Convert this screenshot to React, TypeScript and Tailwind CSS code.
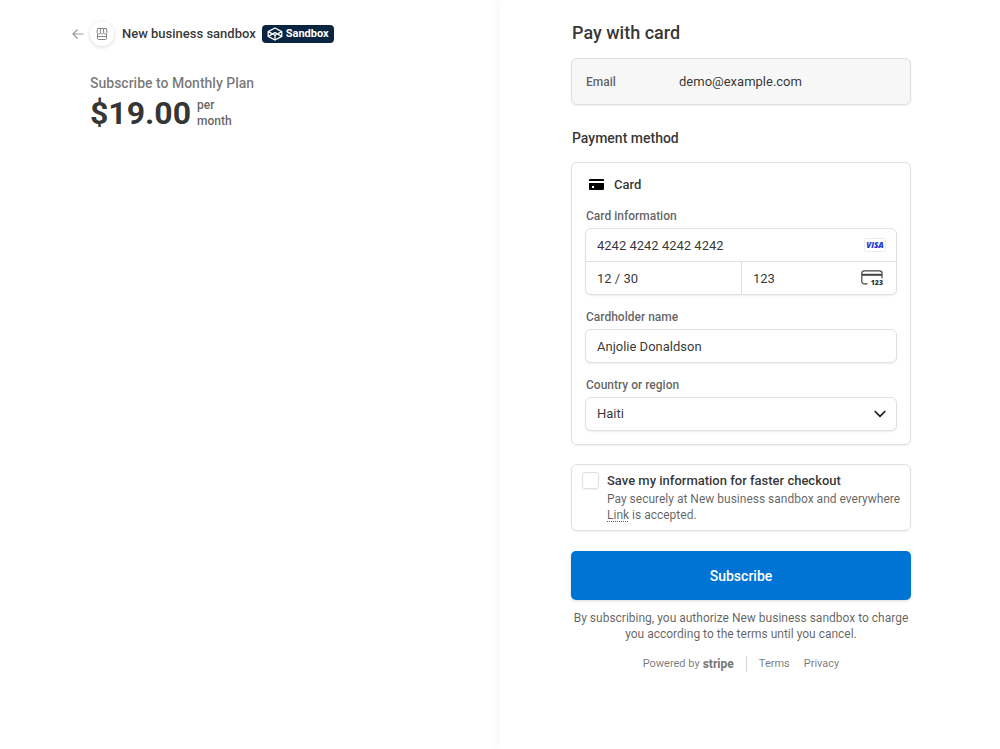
import { useState } from 'react';

const labelClass = 'block pl-px text-xs leading-4 font-medium text-[#1a1a1a]/70';
const fieldClass =
  'w-full rounded-md border border-[#e0e0e0] bg-white px-[11px] text-[13px] text-[#1a1a1a]/90 shadow-[0_1px_2px_rgba(0,0,0,0.07)] outline-none focus:border-[#0074d4]';
const bareFieldClass = 'h-8 w-full min-w-0 bg-transparent px-[11px] text-[13px] text-[#1a1a1a]/90 outline-none';

function BackArrow() {
  return (
    <svg width="12" height="12" viewBox="0 0 12 12" fill="none" stroke="#999" strokeWidth="1.2" aria-hidden="true">
      <path d="M11.5 6H1M5.5 1.5 1 6l4.5 4.5" />
    </svg>
  );
}

function StoreIcon() {
  return (
    <svg width="12" height="12" viewBox="0 0 12 12" fill="none" stroke="#858585" strokeWidth="1" aria-hidden="true">
      <path d="M1.500 .5h9l.5 4c0 .9-.7 1.500-1.600 1.500S7.600 5.400 7.600 4.700C7.600 5.400 6.800 6 6 6s-1.600-.5-1.600-1.300C4.400 5.400 3.500 6 2.600 6S1 5.400 1 4.500l.5-4Z" />
      <path d="M4.400 .8v3.900M7.600 .8v3.900M1.500 6v4.500c0 .6.300 1 1 1h7c.7 0 1-.4 1-1V6M1.500 8.500h9" />
    </svg>
  );
}

function SandboxIcon() {
  return (
    <svg width="16" height="14" viewBox="0 0 16 14" fill="none" stroke="#fff" strokeWidth="1.300" strokeLinejoin="round" aria-hidden="true">
      <path d="M8 1 14.800 4.600v4.800L8 13 1.200 9.400V4.600L8 1Z" />
      <path d="M1.200 4.600 8 8.200l6.800-3.600M1.200 9.400 8 5.600l6.800 3.800" />
      <path d="M8 8.200V13" />
    </svg>
  );
}

function CardIcon() {
  return (
    <svg width="15" height="12" viewBox="0 0 15 12" aria-hidden="true">
      <path d="M1 0h13a1 1 0 0 1 1 1v1H0V1a1 1 0 0 1 1-1Z" />
      <path fillRule="evenodd" d="M0 4h15v6a1 1 0 0 1-1 1H1a1 1 0 0 1-1-1V4Zm3 3v2h2V7H3Z" />
    </svg>
  );
}

function VisaIcon() {
  return (
    <svg width="22" height="14" viewBox="0 0 22 14" role="img" aria-label="Visa" className="shrink-0">
      <rect x=".5" y=".5" width="21" height="13" rx="1" fill="#fff" stroke="#ebebeb" />
      <text x="11" y="10" textAnchor="middle" fill="#1a34dc" className="font-['Open_Sans',sans-serif] text-[8px] font-extrabold italic">
        VISA
      </text>
    </svg>
  );
}

function CvcIcon() {
  return (
    <svg width="22" height="16" viewBox="0 0 22 16" fill="none" aria-hidden="true" className="shrink-0">
      <path d="M6.500 13.800H3.200A2.400 2.400 0 0 1 .8 11.400V3.200A2.400 2.400 0 0 1 3.200.8h15.400A2.400 2.400 0 0 1 21 3.200v5" stroke="#444" strokeWidth="1.200" />
      <path d="M1 4.800h20" stroke="#444" strokeWidth="2" />
      <text x="22" y="15" textAnchor="end" fill="#333" className="font-['Open_Sans',sans-serif] text-[7px] font-extrabold">
        123
      </text>
    </svg>
  );
}

export default function App() {
  const [number, setNumber] = useState('4242 4242 4242 4242');
  const [expiry, setExpiry] = useState('12 / 30');
  const [cvc, setCvc] = useState('123');
  const [name, setName] = useState('Anjolie Donaldson');
  const [save, setSave] = useState(false);

  return (
    <div className="grid min-h-screen grid-cols-2 bg-white font-['Roboto',sans-serif] text-[#1a1a1a]/90">
      <section className="pt-5 pr-8 pl-[72px]">
        <header className="flex h-7 items-center">
          <a href="#back" aria-label="Back" className="mr-1.5">
            <BackArrow />
          </a>
          <span className="mr-2 flex size-6 items-center justify-center rounded-full bg-white shadow-[0_1px_4px_rgba(0,0,0,0.15)]">
            <StoreIcon />
          </span>
          <span className="text-[13px] font-medium">New business sandbox</span>
          <span className="ml-1.5 flex h-[18px] items-center gap-[3px] rounded bg-[#0a2540] px-[5px] text-[11px] font-bold text-white">
            <SandboxIcon />
            Sandbox
          </span>
        </header>
        <div className="mt-[25px] pl-[18px]">
          <h1 className="text-sm leading-5 font-medium text-[#1a1a1a]/60">Subscribe to Monthly Plan</h1>
          <div className="flex items-center gap-1.5">
            <span className="text-[32px] leading-10 font-bold">$19.00</span>
            <span className="text-xs leading-4 font-medium text-[#1a1a1a]/70">
              per
              <br />
              month
            </span>
          </div>
        </div>
      </section>

      <main className="pt-[21px] pr-[89px] pb-8 pl-[71px] shadow-[-4px_0_10px_rgba(0,0,0,0.03)]">
        <form onSubmit={(event) => event.preventDefault()}>
          <h2 className="pl-px text-lg leading-6 font-medium">Pay with card</h2>
          <div className="mt-[13px] flex h-[47px] items-center rounded-md border border-[#e0e0e0] bg-[#f7f7f7] px-3.5 shadow-[0_1px_2px_rgba(0,0,0,0.07)]">
            <span className="w-[93px] text-xs font-medium text-[#1a1a1a]/70">Email</span>
            <span className="text-[13px]">demo@example.com</span>
          </div>

          <h3 className="mt-[23px] pl-px text-sm leading-5 font-medium">Payment method</h3>
          <div className="mt-3.5 rounded-md border border-[#e0e0e0] px-[13px] pt-3 pb-[13px] shadow-[0_1px_2px_rgba(0,0,0,0.07)]">
            <div className="flex h-5 items-center gap-2.5 pl-1 text-[13px] font-medium">
              <CardIcon />
              Card
            </div>

            <fieldset className="mt-[13px]">
              <legend className={labelClass}>Card information</legend>
              <div className="mt-1 rounded-md border border-[#e0e0e0] shadow-[0_1px_2px_rgba(0,0,0,0.07)]">
                <div className="flex items-center border-b border-[#e0e0e0] pr-2.5">
                  <input aria-label="Card number" className={bareFieldClass} value={number} onChange={(e) => setNumber(e.target.value)} />
                  <VisaIcon />
                </div>
                <div className="grid grid-cols-2">
                  <input aria-label="Expiration date" className={bareFieldClass} value={expiry} onChange={(e) => setExpiry(e.target.value)} />
                  <div className="flex items-center border-l border-[#e0e0e0] pr-[13px]">
                    <input aria-label="Security code" className={bareFieldClass} value={cvc} onChange={(e) => setCvc(e.target.value)} />
                    <CvcIcon />
                  </div>
                </div>
              </div>
            </fieldset>

            <label htmlFor="name" className={`${labelClass} mt-3.5`}>
              Cardholder name
            </label>
            <input id="name" className={`${fieldClass} mt-1 h-[34px]`} value={name} onChange={(e) => setName(e.target.value)} />

            <label htmlFor="country" className={`${labelClass} mt-3.5`}>
              Country or region
            </label>
            <div className="mt-1 grid items-center">
              <select id="country" defaultValue="Haiti" className={`${fieldClass} col-start-1 row-start-1 h-[34px] appearance-none`}>
                <option>Haiti</option>
              </select>
              <svg
                width="12"
                height="8"
                viewBox="0 0 12 8"
                fill="none"
                stroke="#1a1a1a"
                strokeWidth="1.700"
                strokeLinecap="round"
                strokeLinejoin="round"
                aria-hidden="true"
                className="pointer-events-none col-start-1 row-start-1 mr-[11px] justify-self-end"
              >
                <path d="m1.200 1.500 4.800 4.800 4.800-4.800" />
              </svg>
            </div>
          </div>

          <div className="mt-[19px] flex gap-2 rounded-md border border-[#e0e0e0] pt-1.5 pr-1 pb-[7px] pl-2.5 shadow-[0_1px_2px_rgba(0,0,0,0.07)]">
            <input
              id="save"
              type="checkbox"
              checked={save}
              onChange={(e) => setSave(e.target.checked)}
              className="mt-px size-[17px] shrink-0 appearance-none rounded-[3px] border border-[#e0e0e0] bg-white shadow-[0_1px_1px_rgba(0,0,0,0.05)] checked:bg-[#0074d4]"
            />
            <div>
              <label htmlFor="save" className="block text-[13px] leading-5 font-medium">
                Save my information for faster checkout
              </label>
              <p className="text-xs leading-4 text-[#1a1a1a]/70">
                Pay securely at New business sandbox and everywhere{' '}
                <a href="#link" className="underline decoration-dotted underline-offset-2">
                  Link
                </a>{' '}
                is accepted.
              </p>
            </div>
          </div>

          <button type="submit" className="mt-5 h-[49px] w-full rounded-[5px] bg-[#0074d4] text-sm font-medium text-white shadow-[0_1px_3px_rgba(0,0,0,0.15)]">
            Subscribe
          </button>
          <p className="mt-2.5 text-center text-xs leading-4 text-[#1a1a1a]/70">
            By subscribing, you authorize New business sandbox to charge you according to the terms until you cancel.
          </p>
        </form>

        <footer className="mt-3.5 flex h-4 items-center justify-center text-[11px] text-[#1a1a1a]/60">
          <a href="#stripe" className="flex items-center gap-[3px]">
            Powered by <span className="text-xs leading-4 font-extrabold">stripe</span>
          </a>
          <span className="mx-3 h-4 w-px bg-[#d5d5d5]" />
          <a href="#terms" className="mr-3.5">
            Terms
          </a>
          <a href="#privacy">Privacy</a>
        </footer>
      </main>
    </div>
  );
}
